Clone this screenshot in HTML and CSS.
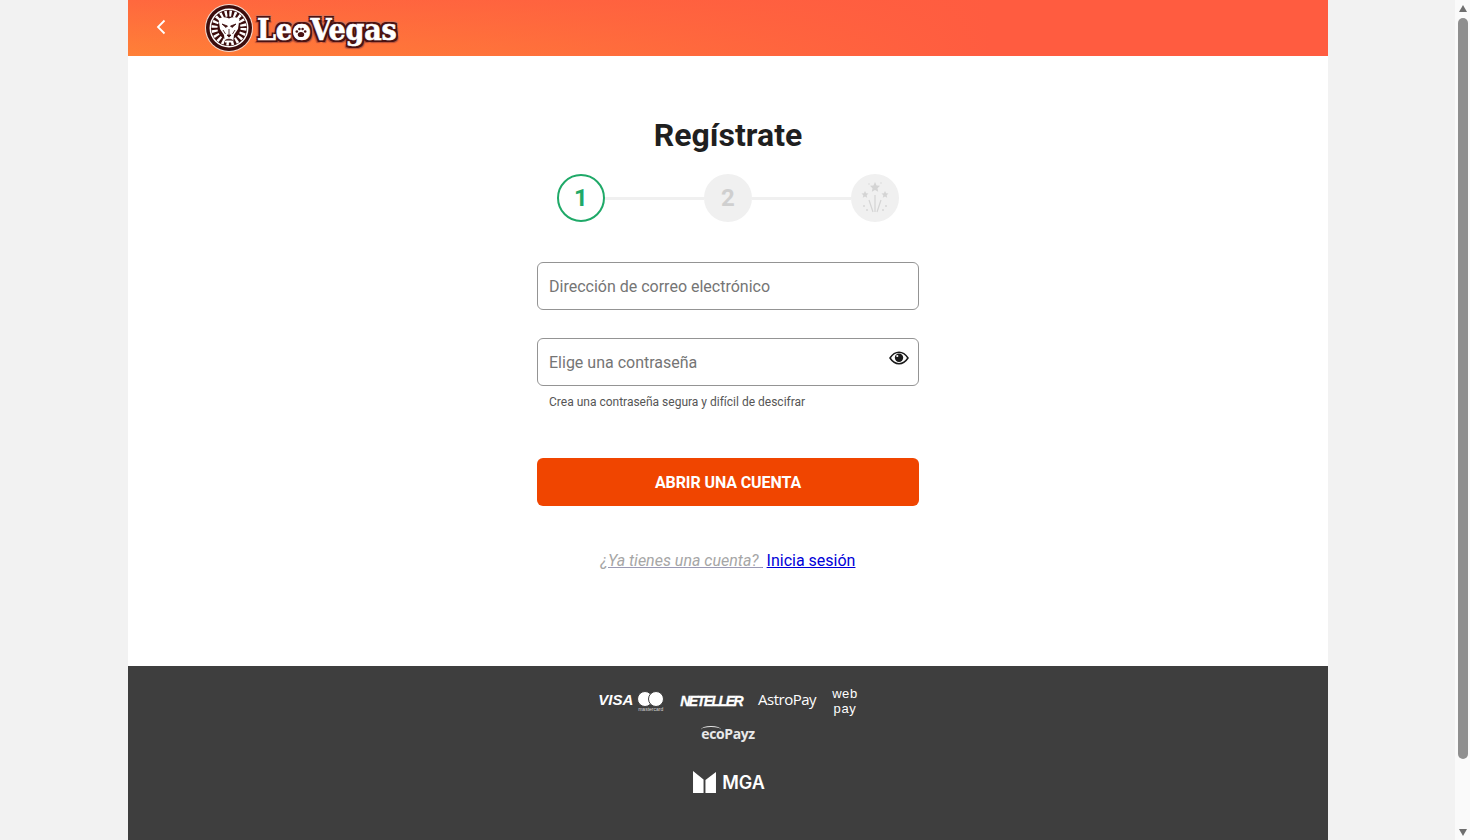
FILE: index.html
```html
<!DOCTYPE html>
<html lang="es">
<head>
  <meta charset="UTF-8"/>
  <title>Regístrate – LeoVegas</title>
  <link rel="stylesheet" href="styles.css">
</head>
<body>
  <div class="viewport">
    <div class="page">
      <header class="topbar">
        <a class="back" href="#" aria-label="Volver">
          <svg width="10" height="16" viewBox="0 0 10 16"><path d="M8.500 1.500 2 8l6.500 6.500" fill="none" stroke="#fff" stroke-width="1.800"/></svg>
        </a>
        <div class="logo">
          <svg class="lion" width="48" height="48" viewBox="0 0 48 48">
            <circle cx="24" cy="24" r="24" fill="#f3d9cf"/>
            <circle cx="24" cy="24" r="23" fill="#3b0d0d"/>
            <circle cx="24" cy="24" r="19.500" fill="#fff"/>
            <circle cx="24" cy="24" r="18" fill="#3b0d0d"/>
            <circle cx="24" cy="24" r="14.500" fill="none" stroke="#fff" stroke-width="6" stroke-dasharray="2.300 2.250"/>
            <path d="M13.500 15c3.500-2.500 7-2 10.500-.5 3.500-1.500 7-2 10.500.5l-1.500 10-4 6-1 7.500h-8l-1-7.500-4-6z" fill="#fff"/>
            <path d="M17 20l5.500 2-1.500 1.500zM31 20l-5.500 2 1.500 1.500zM22 31h4l-2 2.200zM24 25v6M20 36.500c2.500-1.800 5.500-1.800 8 0M18 26l2.500 4M30 26l-2.500 4" fill="#3b0d0d" stroke="#3b0d0d" stroke-width=".8"/>
          </svg>
          <span class="wordmark">Le<span class="paw-o">o<svg width="16" height="16" viewBox="0 0 16 16"><circle cx="8" cy="8" r="8" fill="#fff"/><g fill="#4a1212"><ellipse cx="8" cy="10.500" rx="3.200" ry="2.600"/><circle cx="3.800" cy="7.500" r="1.300"/><circle cx="6.400" cy="5" r="1.300"/><circle cx="9.600" cy="5" r="1.300"/><circle cx="12.200" cy="7.500" r="1.300"/></g></svg></span>Vegas</span>
        </div>
      </header>

      <main class="signup">
        <h1>Regístrate</h1>
        <div class="steps">
          <div class="step step-active">1</div>
          <div class="step-line"></div>
          <div class="step">2</div>
          <div class="step-line"></div>
          <div class="step">
            <svg width="30" height="34" viewBox="0 0 30 34">
              <g fill="#d4d4d4">
                <path d="M15 1l1.600 3.400 3.400.4-2.500 2.400.7 3.500-3.200-1.700-3.200 1.700.7-3.500L10 4.800l3.400-.4z"/>
                <path d="M5 10l1.100 2.300 2.400.3-1.800 1.700.5 2.400L5 15.500l-2.200 1.200.5-2.400-1.800-1.700 2.400-.3z"/>
                <path d="M25 10l1.100 2.300 2.400.3-1.800 1.700.5 2.400-2.200-1.200-2.200 1.200.5-2.400-1.800-1.700 2.400-.3z"/>
                <circle cx="4" cy="25" r=".9"/><circle cx="7" cy="29" r=".9"/><circle cx="26" cy="25" r=".9"/><circle cx="23" cy="29" r=".9"/><circle cx="21" cy="2" r=".7"/><circle cx="9" cy="3" r=".7"/>
              </g>
              <path d="M15 14v17M9 19l4 12M21 19l-4 12" stroke="#d4d4d4" stroke-width="1.200" fill="none"/>
            </svg>
          </div>
        </div>

        <form class="form">
          <div class="field">
            <input type="text" placeholder="Dirección de correo electrónico">
          </div>
          <div class="field">
            <input type="password" placeholder="Elige una contraseña">
            <svg class="eye" width="20" height="14" viewBox="0 0 20 14">
              <path d="M1 7c2.500-3.800 5.500-5.700 9-5.700S16.500 3.200 19 7c-2.500 3.800-5.500 5.700-9 5.700S3.500 10.800 1 7z" fill="#fff" stroke="#1a1a1a" stroke-width="1.500"/>
              <circle cx="10" cy="6.800" r="4.200" fill="#1a1a1a"/>
              <circle cx="8.300" cy="5" r="1.100" fill="#fff"/>
            </svg>
            <p class="hint">Crea una contraseña segura y difícil de descifrar</p>
          </div>
          <button type="button" class="submit">ABRIR UNA CUENTA</button>
        </form>

        <p class="login"><a href="#"><span class="login-q">¿Ya tienes una cuenta?&nbsp;</span></a> <a href="#">Inicia sesión</a></p>
      </main>

      <footer class="footer">
        <div class="pay-logos">
          <div class="pay pay-visa">VISA</div>
          <div class="pay-mc">
            <div class="mc-circles"><i></i><i></i></div>
            <div class="mc-label">mastercard</div>
          </div>
          <div class="pay pay-neteller">NETELLER</div>
          <div class="pay pay-astro">AstroPay</div>
          <div class="pay pay-web">web<br>pay</div>
          <div class="pay pay-eco">ecoPayz</div>
        </div>
        <div class="mga">
          <svg width="23" height="22" viewBox="0 0 24 23"><path d="M0 0l11 9v14H0zM24 1v22H13V9.500z" fill="#fff"/></svg>
          <span>MGA</span>
        </div>
      </footer>
    </div>
  </div>

  <div class="scrollbar">
    <span class="sb-arrow sb-up"></span>
    <span class="sb-thumb"></span>
    <span class="sb-arrow sb-down"></span>
  </div>
</body>
</html>
```

FILE: styles.css
```css
* { box-sizing: border-box; }
html, body { height: 100%; }
body {
  margin: 0;
  display: flex;
  overflow: hidden;
  background: #f2f2f2;
  font-family: Roboto, sans-serif;
  color: #1f1f1f;
}
.viewport {
  flex: 1;
  padding-left: 128px;
}

/* drawn scrollbar */
.scrollbar {
  width: 15px;
  flex: none;
  display: flex;
  flex-direction: column;
  align-items: center;
  padding: 5px 0 4px;
  background: #fafafa;
}
.sb-arrow {
  width: 0;
  height: 0;
  border-left: 4.500px solid transparent;
  border-right: 4.500px solid transparent;
}
.sb-up { border-bottom: 7px solid #6e6e6e; }
.sb-down { border-top: 7px solid #6e6e6e; margin-top: auto; }
.sb-thumb {
  width: 10px;
  height: 741px;
  margin-top: 6px;
  border-radius: 5px;
  background: #8f8f8f;
}

.page {
  width: 1200px;
  height: 840px;
  background: #fff;
}

/* header */
.topbar {
  height: 56px;
  display: flex;
  align-items: center;
  padding-left: 28px;
  background:
    linear-gradient(to right, rgba(255,92,64,0) 0%, rgba(255,92,64,0.35) 30%, #ff5c40 72%),
    linear-gradient(to bottom, #ff683e, #ff8037);
}
.back { display: flex; margin-top: -3px; }
.logo {
  display: flex;
  align-items: center;
  margin-left: 39px;
}
.wordmark {
  margin-left: 4px;
  margin-top: 4px;
  font-family: "DejaVu Serif Condensed", "DejaVu Serif", serif;
  font-weight: 700;
  font-size: 30px;
  letter-spacing: -0.2px;
  line-height: 48px;
  color: #fff;
  -webkit-text-stroke: 0.6px #fff;
  text-shadow:
    2px 0 0 #4a1212, -2px 0 0 #4a1212, 0 2px 0 #4a1212, 0 -2px 0 #4a1212,
    2px 2px 0 #4a1212, -2px 2px 0 #4a1212, 2px -2px 0 #4a1212, -2px -2px 0 #4a1212,
    3px 3px 1px #b5503a, -3px 3px 1px #b5503a, 3px -3px 1px #d8765c, -3px -3px 1px #d8765c;
}
.paw-o { position: relative; }
.paw-o svg {
  position: absolute;
  left: 0;
  top: 12px;
}

/* main */
.signup {
  height: 610px;
  padding-top: 59px;
  display: flex;
  flex-direction: column;
  align-items: center;
}
h1 {
  margin: 0;
  font-size: 32px;
  line-height: 40px;
  font-weight: 700;
  color: #1f1f1f;
}
.steps {
  display: flex;
  align-items: center;
  margin-top: 19px;
}
.step {
  width: 48px;
  height: 48px;
  border-radius: 50%;
  background: #f0f0f0;
  color: #cfcfcf;
  font-size: 24px;
  font-weight: 700;
  display: flex;
  align-items: center;
  justify-content: center;
}
.step-active {
  background: #fff;
  border: 2px solid #1fa968;
  color: #1fa968;
}
.step-line {
  width: 99px;
  height: 3px;
  background: #f0f0f0;
}

.form {
  width: 382px;
  margin-top: 40px;
}
.field {
  position: relative;
  margin-bottom: 28px;
}
.field input {
  display: block;
  width: 100%;
  height: 48px;
  padding: 0 11px;
  border: 1px solid #949494;
  border-radius: 6px;
  background: #fff;
  font-family: Roboto, sans-serif;
  font-size: 16px;
  outline: none;
}
.field input::placeholder { color: #757575; opacity: 1; }
.eye {
  position: absolute;
  right: 10px;
  top: 13px;
}
.hint {
  margin: 8px 0 0 12px;
  font-size: 12px;
  line-height: 16px;
  color: #555;
}
.submit {
  display: block;
  width: 100%;
  height: 48px;
  margin-top: 48px;
  border: none;
  border-radius: 6px;
  background: #f04500;
  color: #fff;
  font-family: Roboto, sans-serif;
  font-size: 16px;
  font-weight: 700;
  letter-spacing: -0.1px;
  cursor: pointer;
}
.login {
  margin: 45px 0 0;
  font-size: 16px;
  line-height: 20px;
}
.login a { color: #0000d8; }
.login-q {
  color: #a6a6a6;
  font-style: italic;
  text-decoration: underline;
  text-decoration-color: #9a9ab4;
}

/* footer */
.footer {
  height: 174px;
  background: #3e3e3e;
  padding-top: 24px;
  display: flex;
  flex-direction: column;
  align-items: center;
  color: #fff;
}
.pay-logos {
  width: 290px;
  display: flex;
  flex-wrap: wrap;
  justify-content: center;
  align-items: center;
  column-gap: 16px;
  row-gap: 12px;
}
.pay { font-family: "Liberation Sans", sans-serif; color: #fff; }
.pay-visa {
  font-size: 15px;
  font-weight: 700;
  font-style: italic;
  margin: -4px -12px 0 0;
}
.pay-mc { width: 27px; display: flex; flex-direction: column; align-items: center; }
.mc-circles { display: flex; }
.mc-circles i {
  width: 16px;
  height: 16px;
  border-radius: 50%;
  background: #fff;
  border: 1px solid #3e3e3e;
}
.mc-circles i + i { margin-left: -5px; }
.mc-label {
  font-family: "Liberation Sans", sans-serif;
  font-size: 5px;
  line-height: 5px;
  color: #d8d8d8;
}
.pay-neteller {
  font-size: 14px;
  font-weight: 700;
  font-style: italic;
  letter-spacing: -1.5px;
  -webkit-text-stroke: 0.3px #fff;
}
.pay-astro {
  font-family: "Open Sans", sans-serif;
  font-size: 15px;
  letter-spacing: -0.5px;
  margin-top: -4px;
}
.pay-web {
  font-size: 13px;
  line-height: 15px;
  text-align: center;
  letter-spacing: 0.6px;
  margin: -4px 0;
}
.pay-eco {
  position: relative;
  font-family: "Open Sans", sans-serif;
  font-weight: 700;
  font-size: 14px;
  letter-spacing: -0.4px;
  color: #e8e8e8;
}
.pay-eco::before {
  content: "";
  position: absolute;
  left: 0;
  top: 2px;
  width: 20px;
  height: 6px;
  border-top: 1px solid #e8e8e8;
  border-radius: 50%;
}
.mga {
  display: flex;
  align-items: center;
  gap: 6px;
  margin: 28px 0 0 2px;
  font-family: Inter, sans-serif;
  font-size: 18px;
  font-weight: 600;
}
```
